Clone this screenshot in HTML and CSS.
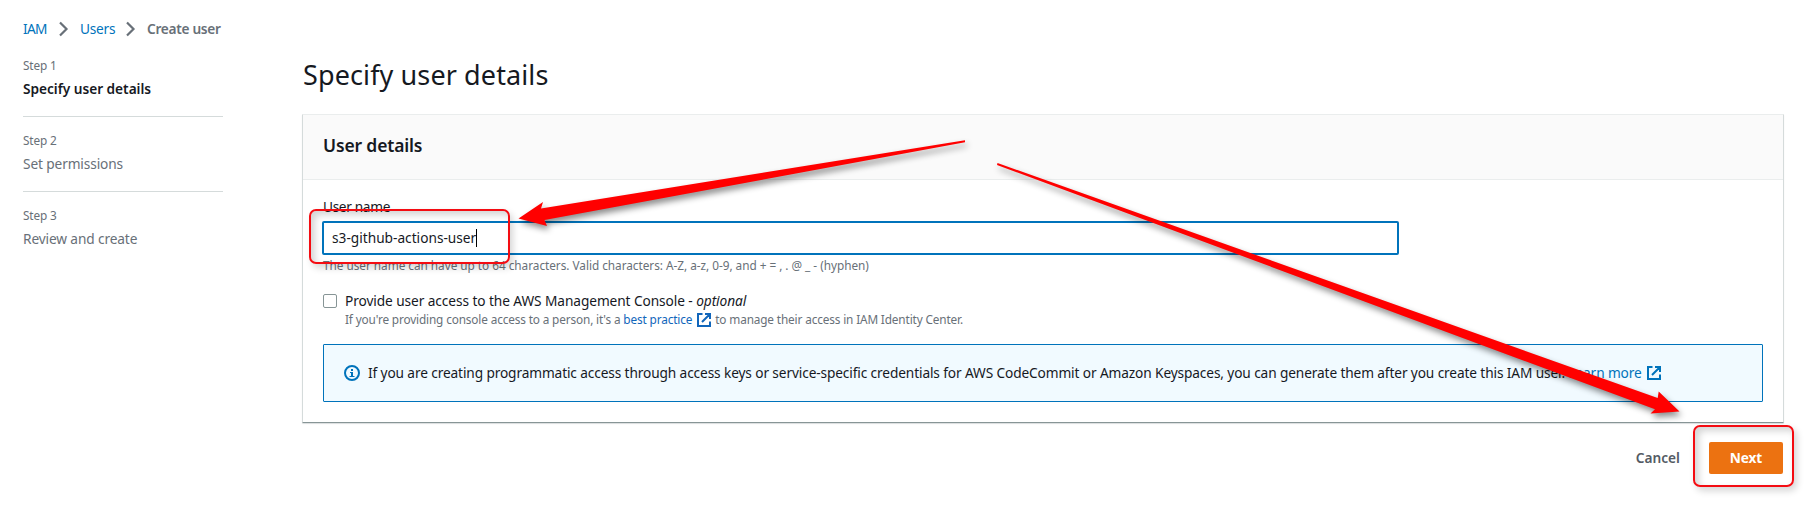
FILE: index.html
```html
<!DOCTYPE html>
<html lang="en">
<head>
<meta charset="utf-8">
<title>Create user</title>
<link rel="stylesheet" href="styles.css">
</head>
<body>
<div class="page">
  <aside class="side">
    <nav class="crumbs">
      <a class="link iam">IAM</a>
      <svg class="chevron" width="10" height="16" viewBox="0 0 10 16"><path d="M1 1.500 7.500 8 1 14.500"/></svg>
      <a class="link users">Users</a>
      <svg class="chevron" width="10" height="16" viewBox="0 0 10 16"><path d="M1 1.500 7.500 8 1 14.500"/></svg>
      <span class="current">Create user</span>
    </nav>
    <ol class="steps">
      <li class="step"><span class="step-no">Step 1</span><span class="step-name active">Specify user details</span></li>
      <li class="step"><span class="step-no">Step 2</span><span class="step-name">Set permissions</span></li>
      <li class="step"><span class="step-no">Step 3</span><span class="step-name">Review and create</span></li>
    </ol>
  </aside>
  <main class="main">
    <h1 class="title">Specify user details</h1>
    <section class="card">
      <header class="card-head"><h2 class="card-title">User details</h2></header>
      <div class="card-body">
        <div class="label">User name</div>
        <div class="input"><span class="value">s3-github-actions-user</span><span class="caret"></span></div>
        <div class="help">The user name can have up to 64 characters. Valid characters: A-Z, a-z, 0-9, and + = , . @ _ - (hyphen)</div>
        <div class="option">
          <span class="checkbox"></span>
          <div>
            <div class="option-name">Provide user access to the AWS Management Console - <i>optional</i></div>
            <div class="option-note">If you're providing console access to a person, it's a <a class="note-link">best practice</a><svg class="ext" width="14" height="14" viewBox="0 0 14 14"><path d="M5.500 1H1v12h12V8.500M8 1h5v5M13 1 5 9"/></svg>to manage their access in IAM Identity Center.</div>
          </div>
        </div>
        <div class="alert">
          <svg class="info" width="16" height="16" viewBox="0 0 16 16"><circle cx="8" cy="8" r="7"/><path d="M7 4h2v2H7zM6 7h3v4h1.500v1h-5v-1H7V8H6z"/></svg>
          <span class="alert-text">If you are creating programmatic access through access keys or service-specific credentials for AWS CodeCommit or Amazon Keyspaces, you can generate them after you create this IAM user. <a class="link">Learn more</a></span>
          <svg class="ext alert-ext" width="14" height="14" viewBox="0 0 14 14"><path d="M5.500 1H1v12h12V8.500M8 1h5v5M13 1 5 9"/></svg>
        </div>
      </div>
    </section>
    <footer class="actions"><span class="cancel">Cancel</span><span class="next">Next</span></footer>
  </main>
</div>
<div class="mark mark-name"></div>
<div class="mark mark-next"></div>
<svg class="arrows" width="1816" height="507" viewBox="0 0 1816 507">
  <path d="M965 140.200 541 208.500 543 202 518.500 218.500 547 226 544.500 220 965 142.200Z"/>
  <path d="M997.500 163 1657.700 398 1658.700 391.500 1679.500 411.500 1650.500 413.500 1655 409.300 997 165Z"/>
</svg>
</body>
</html>
```
FILE: styles.css
```css
* { box-sizing: border-box; }
body {
  margin: 0;
  background: #fff;
  color: #16191f;
  font: 13.7px/22px "Noto Sans", "Open Sans", sans-serif;
  letter-spacing: -0.12px;
  white-space: nowrap;
}
.page { display: flex; width: 1816px; height: 507px; overflow: hidden; }
.side { width: 302px; padding: 18px 79px 0 23px; }
.crumbs { display: flex; align-items: center; height: 22px; }
.link { color: #0073bb; }
.iam { width: 25px; letter-spacing: -0.7px; }
.users { width: 35px; letter-spacing: -0.25px; }
.chevron { margin: 0 11px; fill: none; stroke: #687078; stroke-width: 2.2; }
.current { font-weight: 600; color: #687078; letter-spacing: -0.3px; }
.steps { list-style: none; margin: 17px 0 0; padding: 0; }
.step { display: flex; flex-direction: column; gap: 5px; padding-bottom: 16px; border-bottom: 1px solid #d5dbdb; margin-bottom: 15px; }
.step:last-child { border: 0; }
.step-no { font-size: 11.8px; line-height: 16px; color: #687078; }
.step-name { color: #687078; }
.active { font-weight: 600; color: #16191f; letter-spacing: -0.03px; }

.main { width: 1482px; padding-top: 57px; }
.title { margin: 0 0 21px 1px; font-size: 27px; line-height: 36px; font-weight: 400; letter-spacing: 0.11px; }
.card { height: 309px; border: 1px solid #d5dbdb; border-top-color: #eaeded; border-bottom-color: #879596; border-radius: 1px; box-shadow: 0 1px 1px rgba(0, 28, 36, 0.15); }
.card-head { height: 65px; padding: 18px 20px 0; background: #fafafa; border-bottom: 1px solid #eaeded; }
.card-title { margin: 0; font-size: 17.5px; line-height: 24px; font-weight: 600; letter-spacing: -0.15px; }
.card-body { padding: 16px 20px 0; }
.label { letter-spacing: -0.35px; }
.input { display: flex; align-items: center; width: 1077px; height: 34px; margin: 3px 0 2px -1px; padding: 0 8px; border: 2px solid #0073bb; border-radius: 2px; letter-spacing: 0; }
.value { width: 144px; }
.caret { width: 1px; height: 18px; background: #000; }
.help { font-size: 11.8px; line-height: 16px; letter-spacing: -0.03px; color: #687078; }
.option { display: flex; gap: 8px; margin-top: 17px; }
.checkbox { width: 14px; height: 14px; margin-top: 4px; border: 1px solid #879596; border-radius: 2px; }
.option-name { letter-spacing: -0.08px; }
.option-note { height: 16px; margin-top: -1px; font-size: 11.8px; line-height: 16px; letter-spacing: -0.14px; color: #687078; }
.note-link { color: #1166bb; }
.ext { fill: none; stroke: #0073bb; stroke-width: 2; }
.option-note .ext { margin: 0 4px 0 5px; vertical-align: -3px; stroke: #1166bb; }
.alert { display: flex; align-items: center; height: 58px; margin-top: 17px; padding: 0 20px; background: #f1faff; border: 1px solid #0073bb; border-radius: 1px; }
.info { margin-right: 8px; }
.info circle { fill: none; stroke: #0073bb; stroke-width: 2; }
.info path { fill: #0073bb; }
.alert-ext { margin-left: 5px; }
.actions { display: flex; justify-content: flex-end; align-items: center; margin-top: 19px; padding-right: 1px; font-weight: 600; }
.cancel { margin-right: 29px; color: #545b64; letter-spacing: 0; }
.next { width: 74px; height: 32px; line-height: 32px; text-align: center; font-weight: 700; color: #fff; background: #ec7211; border-radius: 2px; }

/* Annotations drawn over the form */
.mark { position: absolute; border: 2px solid #f40c12; border-radius: 7px; box-shadow: 3px 4px 7px rgba(0, 0, 0, 0.16), inset 4px 4px 7px rgba(0, 0, 0, 0.17); }
.mark-name { left: 309px; top: 209px; width: 201px; height: 55px; }
.mark-next { left: 1693px; top: 425px; width: 101px; height: 62px; }
.arrows { position: absolute; left: 0; top: 0; fill: #f00; filter: drop-shadow(2px 4px 3px rgba(0, 0, 0, 0.45)); }
```
